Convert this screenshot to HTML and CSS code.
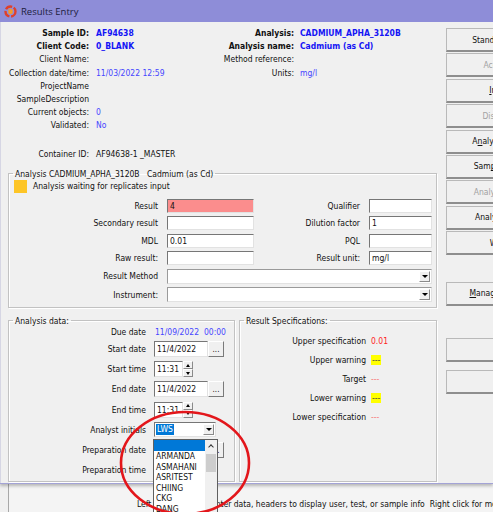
FILE: index.html
```html
<!DOCTYPE html>
<html lang="en">
<head>
    <meta charset="UTF-8">
    <title>Results Entry</title>
    <link rel="stylesheet" href="styles.css">
</head>
<body>

    <!-- Results entry window -->
    <div class="window">
        <div class="titlebar">
            <svg class="app-icon" viewBox="0 0 12 12">
                <circle cx="6" cy="6" r="4.6" fill="none" stroke="#e0402a" stroke-width="2.2" stroke-dasharray="6.5 1.6"/>
                <path d="M4 4.4 L6 3.4 L8 4.4 L8 7.6 L6 8.6 L4 7.6 Z" fill="#f59a2a"/>
            </svg>
            <span>Results Entry</span>
        </div>

        <div class="client">
            <div class="main">

                <!-- Sample / analysis header -->
                <div class="info">
                    <div class="info-left">
                        <span class="lbl bold">Sample ID:</span><span class="val bold blue">AF94638</span>
                        <span class="lbl bold">Client Code:</span><span class="val bold blue">0_BLANK</span>
                        <span class="lbl">Client Name:</span><span class="val"></span>
                        <span class="lbl">Collection date/time:</span><span class="val light-blue pre">11/03/2022  12:59</span>
                        <span class="lbl">ProjectName</span><span class="val"></span>
                        <span class="lbl">SampleDescription</span><span class="val"></span>
                        <span class="lbl">Current objects:</span><span class="val light-blue">0</span>
                        <span class="lbl">Validated:</span><span class="val light-blue">No</span>
                    </div>
                    <div class="info-right">
                        <span class="lbl bold">Analysis:</span><span class="val bold blue">CADMIUM_APHA_3120B</span>
                        <span class="lbl bold">Analysis name:</span><span class="val bold blue">Cadmium (as Cd)</span>
                        <span class="lbl">Method reference:</span><span class="val"></span>
                        <span class="lbl">Units:</span><span class="val light-blue">mg/l</span>
                    </div>
                </div>
                <div class="container-row">
                    <span class="lbl">Container ID:</span><span class="val">AF94638-1 _MASTER</span>
                </div>

                <!-- Analysis results -->
                <fieldset class="group analysis">
                    <legend>Analysis CADMIUM_APHA_3120B   Cadmium (as Cd)</legend>
                    <div class="status"><span class="swatch"></span>Analysis waiting for replicates input</div>
                    <div class="result-grid">
                        <label>Result</label><div class="input bad">4</div>
                        <label>Qualifier</label><div class="input"></div>
                        <label>Secondary result</label><div class="input"></div>
                        <label>Dilution factor</label><div class="input">1</div>
                        <label>MDL</label><div class="input">0.01</div>
                        <label>PQL</label><div class="input"></div>
                        <label>Raw result:</label><div class="input"></div>
                        <label>Result unit:</label><div class="input">mg/l</div>
                        <label>Result Method</label><div class="input select wide"><span class="drop"></span></div>
                        <label>Instrument:</label><div class="input select wide"><span class="drop"></span></div>
                    </div>
                </fieldset>

                <div class="lower">
                    <fieldset class="group data">
                        <legend>Analysis data:</legend>
                        <div class="data-grid">
                            <label>Due date</label><span class="light-blue pre due">11/09/2022  00:00</span>
                            <label>Start date</label>
                            <div class="field"><div class="input date">11/4/2022</div><div class="dots">...</div></div>
                            <label>Start time</label>
                            <div class="field"><div class="input time">11:31</div><div class="spin"><span class="up"></span><span class="down"></span></div></div>
                            <label>End date</label>
                            <div class="field"><div class="input date">11/4/2022</div><div class="dots">...</div></div>
                            <label>End time</label>
                            <div class="field"><div class="input time">11:31</div><div class="spin"><span class="up"></span><span class="down"></span></div></div>
                            <label>Analyst initials</label>
                            <div class="field"><div class="input combo"><span class="picked">LWS</span><span class="drop"></span></div></div>
                            <label>Preparation date</label>
                            <div class="field"><div class="input date"></div><div class="dots">...</div></div>
                            <label>Preparation time</label>
                            <div class="field"><div class="input time"></div><div class="spin"><span class="up"></span><span class="down"></span></div></div>
                        </div>
                    </fieldset>

                    <fieldset class="group specs">
                        <legend>Result Specifications:</legend>
                        <div class="spec-grid">
                            <label>Upper specification</label><span class="red">0.01</span>
                            <label>Upper warning</label><span><span class="warn">---</span></span>
                            <label>Target</label><span class="pink">---</span>
                            <label>Lower warning</label><span><span class="warn">---</span></span>
                            <label>Lower specification</label><span class="pink">---</span>
                        </div>
                    </fieldset>
                </div>
            </div>

            <!-- Command buttons (cut off by the screen edge) -->
            <div class="buttons">
                <div class="btn">Standard QC</div>
                <div class="btn off">Accept</div>
                <div class="btn"><u>I</u>nfo</div>
                <div class="btn off">Display</div>
                <div class="btn">A<u>n</u>alysis info</div>
                <div class="btn">Sam<u>p</u>le info</div>
                <div class="btn off">Analysis log</div>
                <div class="btn">Analyte QC</div>
                <div class="btn">Wiz</div>
                <div class="btn manage"><u>M</u>anage notes</div>
                <div class="btn blank"></div>
                <div class="btn save"><u>S</u></div>
            </div>
        </div>
    </div>

    <!-- Window behind, status hint -->
    <div class="behind">
        <div class="hint pre">Left click on cell to enter data, headers to display user, test, or sample info  Right click for more</div>
    </div>

    <!-- Open analyst list -->
    <div class="droplist">
        <div class="item current"></div>
        <div class="item">ARMANDA</div>
        <div class="item">ASMAHANI</div>
        <div class="item">ASRITEST</div>
        <div class="item">CHIING</div>
        <div class="item">CKG</div>
        <div class="item">DANG</div>
        <div class="scroll"><span class="arrow"></span><span class="thumb"></span></div>
    </div>

    <!-- Red annotation -->
    <svg class="mark" width="140" height="112" viewBox="0 0 140 112">
        <ellipse cx="68" cy="56" rx="64" ry="51" fill="none" stroke="#e3161b" stroke-width="2.6"/>
    </svg>

</body>
</html>
```

FILE: styles.css
```css
/* Page */
body {
    margin: 0;
    width: 493px;
    height: 512px;
    overflow: hidden;
    position: relative;
    background-color: #f0f0f0;
    font-family: "DejaVu Sans Condensed", "DejaVu Sans", sans-serif;
    font-size: 8.5px;
    color: #111;
}

.pre {
    white-space: pre;
}

.bold {
    font-weight: bold;
}

.blue {
    color: #1414f5;
}

.light-blue {
    color: #4646ff;
}

/* Window */
.window {
    height: 484px;
    overflow: hidden;
    background-color: #f0f0f0;
    border-bottom: 1px solid #a3a3d6;
    box-shadow: inset 1px 0 0 #d6d6e4, 0 2px 3px rgba(0, 0, 0, 0.25);
    box-sizing: border-box;
    position: relative;
    z-index: 1;
}

.titlebar {
    height: 22px;
    background-color: #8e8dd8;
    display: flex;
    align-items: center;
    padding-left: 4px;
    font-family: "Open Sans", sans-serif;
    font-size: 9.5px;
    color: #1c1c3c;
}

.app-icon {
    width: 13px;
    height: 13px;
    margin-right: 4px;
}

.client {
    display: flex;
}

.main {
    width: 446px;
    flex-shrink: 0;
}

/* Header info */
.info {
    display: flex;
    padding-top: 4.5px;
}

.info-left {
    display: grid;
    grid-template-columns: 89px 111px;
    grid-auto-rows: 13.2px;
    align-items: center;
}

.info-right {
    display: grid;
    grid-template-columns: 94px auto;
    grid-auto-rows: 13.2px;
    align-items: center;
    align-content: start;
}

.lbl {
    text-align: right;
    white-space: nowrap;
}

.info-left .val,
.container-row .val {
    padding-left: 7px;
    white-space: nowrap;
}

.info-right .val {
    padding-left: 6px;
    white-space: nowrap;
}

.container-row {
    display: grid;
    grid-template-columns: 89px auto;
    height: 13.2px;
    align-items: center;
    margin-top: 15.3px;
}

/* Group boxes */
.group {
    margin: 0;
    padding: 0 4px;
    border: 1px solid #c2c2c2;
    box-shadow: 1px 1px 0 #fff, inset 1px 1px 0 #fff;
    box-sizing: border-box;
    min-width: 0;
}

.group legend {
    padding: 0 2px;
    line-height: 12px;
    white-space: pre;
}

.analysis {
    margin: 7.4px 0 0 8px;
    width: 429px;
    padding-bottom: 4.5px;
}

.status {
    display: flex;
    align-items: center;
    height: 13px;
}

.swatch {
    width: 13px;
    height: 13px;
    margin: 0 6px 0 1px;
    background-color: #fdc526;
}

.result-grid {
    display: grid;
    grid-template-columns: 145px 87px 97px 63px;
    grid-template-rows: repeat(4, 14px) 15px 15px;
    column-gap: 9px;
    row-gap: 3.5px;
    margin-top: 6px;
}

.result-grid label,
.data-grid label,
.spec-grid label {
    text-align: right;
    align-self: center;
    white-space: nowrap;
}

/* Inputs */
.input {
    background-color: #fff;
    border: 1px solid;
    border-color: #767676 #e2e2e2 #e2e2e2 #767676;
    box-sizing: border-box;
    height: 100%;
    padding-left: 2px;
    display: flex;
    align-items: center;
    white-space: nowrap;
}

.input.bad {
    background-color: #fb8d8d;
}

.select.wide {
    grid-column: 2 / 5;
    border-color: #9a9a9a #e2e2e2 #e2e2e2 #9a9a9a;
}

.drop {
    margin-left: auto;
    width: 11px;
    height: 11px;
    margin-right: 1px;
    background-color: #f0f0f0;
    border: 1px solid;
    border-color: #fff #8a8a8a #8a8a8a #fff;
    box-sizing: border-box;
    display: flex;
    align-items: center;
    justify-content: center;
}

.drop::before {
    content: "";
    border-top: 3px solid #000;
    border-left: 3px solid transparent;
    border-right: 3px solid transparent;
}

/* Lower group boxes */
.lower {
    display: flex;
    margin-top: 7px;
}

.data {
    margin-left: 8px;
    width: 227px;
    height: 167px;
}

.specs {
    margin-left: 4px;
    width: 198px;
    height: 167px;
}

.data-grid {
    display: grid;
    grid-template-columns: 133px auto;
    grid-template-rows: 10px repeat(7, 16px);
    column-gap: 8px;
    row-gap: 4.2px;
}

.due {
    align-self: center;
    padding-left: 1px;
}

.field {
    display: flex;
    height: 16px;
}

.input.date {
    width: 54px;
}

.input.time {
    width: 29px;
}

.dots {
    width: 16px;
    height: 16px;
    box-sizing: border-box;
    background-color: #f0f0f0;
    border: 1px solid;
    border-color: #fff #7a7a7a #7a7a7a #fff;
    text-align: center;
    line-height: 16px;
    font-size: 8px;
}

.spin {
    width: 10px;
    display: flex;
    flex-direction: column;
}

.spin span {
    flex: 1;
    background-color: #f0f0f0;
    border: 1px solid;
    border-color: #fff #8a8a8a #8a8a8a #fff;
    display: flex;
    align-items: center;
    justify-content: center;
}

.spin .up::before {
    content: "";
    border-bottom: 3px solid #000;
    border-left: 2.5px solid transparent;
    border-right: 2.5px solid transparent;
}

.spin .down::before {
    content: "";
    border-top: 3px solid #000;
    border-left: 2.5px solid transparent;
    border-right: 2.5px solid transparent;
}

.input.combo {
    width: 62px;
    height: 15px;
    padding-left: 1px;
}

.picked {
    background-color: #0078d7;
    color: #fff;
    padding: 0 1px;
    line-height: 11px;
}

.spec-grid {
    display: grid;
    grid-template-columns: 122px auto;
    grid-auto-rows: 12px;
    column-gap: 5px;
    row-gap: 7px;
    padding-top: 8px;
    align-items: center;
}

.red {
    color: #ff1e1e;
}

.pink {
    color: #f77878;
}

.warn {
    background-color: #ffff00;
    color: #444;
    padding: 0 1px;
}

/* Buttons column */
.buttons {
    display: flex;
    flex-direction: column;
    gap: 1.4px;
    padding-top: 6px;
    width: 100px;
    flex-shrink: 0;
}

.btn {
    height: 24px;
    box-sizing: border-box;
    background-color: #f0f0f0;
    border: 1px solid #b9b9b9;
    border-bottom: 2px solid #8e8e8e;
    border-right: none;
    display: flex;
    align-items: center;
    justify-content: center;
    white-space: nowrap;
}

.btn.off {
    color: #a2a2a2;
}

.btn.manage {
    margin-top: 25.4px;
}

.btn.blank {
    margin-top: 30.6px;
}

.btn.save {
    margin-top: 6.6px;
}

/* Window behind */
.behind {
    height: 28px;
    padding-left: 8px;
}

.hint {
    height: 100%;
    border-left: 1px solid #a8a8a8;
    background-color: #f4f4f4;
    padding: 15px 0 0 128px;
    box-sizing: border-box;
    overflow: hidden;
}

/* Dropdown list */
.droplist {
    position: absolute;
    left: 153px;
    top: 439px;
    width: 65px;
    height: 80px;
    box-sizing: border-box;
    background-color: #fff;
    border: 1px solid #5f5f5f;
    z-index: 2;
}

.item {
    height: 10.5px;
    line-height: 10.5px;
    padding-left: 2px;
    color: #111;
}

.item.current {
    height: 11px;
    margin-right: 12px;
    background-color: #0078d7;
}

.scroll {
    position: absolute;
    top: 0;
    right: 0;
    bottom: 0;
    width: 12px;
    background-color: #f0f0f0;
}

.scroll .arrow {
    display: flex;
    height: 12px;
    align-items: center;
    justify-content: center;
}

.scroll .arrow::before {
    content: "";
    width: 3px;
    height: 3px;
    border-top: 1px solid #333;
    border-left: 1px solid #333;
    transform: rotate(45deg);
    margin-top: 2px;
}

.scroll .thumb {
    display: block;
    margin: 2px 1px 0;
    height: 18px;
    background-color: #cdcdcd;
}

/* Red circle annotation */
.mark {
    position: absolute;
    left: 117px;
    top: 407px;
    z-index: 3;
    overflow: visible;
}
```
